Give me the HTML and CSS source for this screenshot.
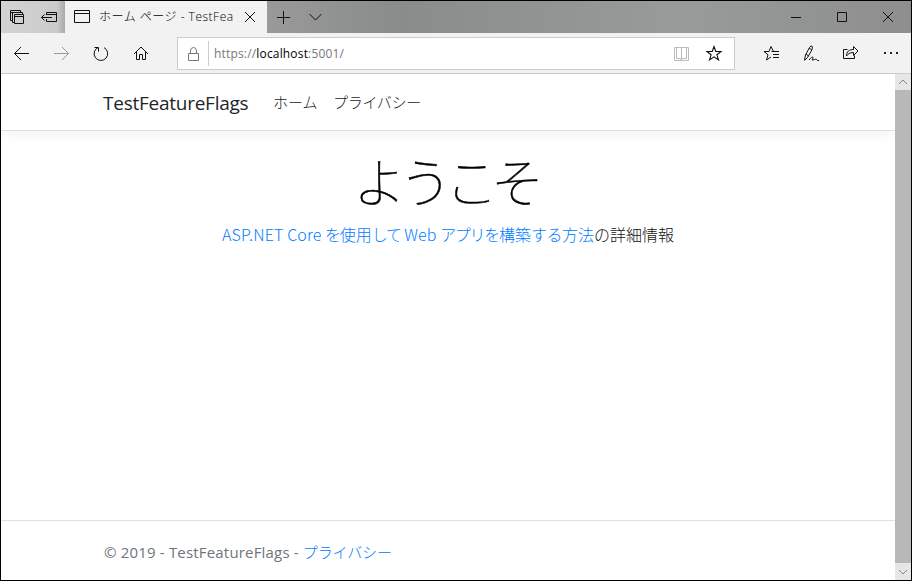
FILE: index.html
```html
<!DOCTYPE html>
<html lang="ja">
<head>
<meta charset="utf-8">
<title>ホーム ページ - TestFeatureFlags</title>
<link rel="stylesheet" href="styles.css">
</head>
<body>
<div class="window">
  <header class="titlebar">
    <div class="tab-tools">
      <svg width="64" height="32" viewBox="1 1 64 32"><path d="M12.500 20.500H10.500V10.500H20.500V12.500M10.500 12.500H20.500M14.500 22.500H12.500V12.500H22.500V14.500M14.500 14.500H23.500V23.500H14.500ZM14.500 16.500H23.500"/><path d="M46.500 15V12.500H56.500V21.500H46.500V19M46.500 14.500H56.500M41.500 17.500H52M44.500 14.500L41.500 17.500L44.500 20.500"/></svg>
    </div>
    <div class="tab">
      <svg width="16" height="14" viewBox="0 0 16 14"><path d="M.5 .5H15.500V12.500H.5ZM.5 3.500H15.500"/></svg>
      <span class="tab-title">ホーム ページ - TestFea</span>
      <svg class="tab-close" width="10" height="10" viewBox="0 0 10 10"><path d="M0 0L10 10M10 0L0 10"/></svg>
    </div>
    <svg class="new-tab" width="56" height="32" viewBox="267 1 56 32"><path d="M277 17.500H290M283.500 11V24"/><path d="M309.500 14L315.500 20L321.500 14"/></svg>
    <svg class="controls" width="138" height="32" viewBox="773 1 138 32"><path d="M791 17.500H801M837.500 12.500H846.500V21.500H837.500Z"/><path d="M883 12L893 22M893 12L883 22"/></svg>
  </header>
  <nav class="toolbar">
    <svg width="176" height="40" viewBox="1 33 176 40">
      <path d="M14.500 53.500H29M21 47L14.500 53.500L21 60"/>
      <path class="disabled" d="M54 53.500H68.500M62 47L68.500 53.500L62 60"/>
      <path d="M98 47.500A6.800 6.800 0 1 0 104 47.600M94.500 47.500H98.500V51.500"/>
      <path d="M134 54L141 47L148 54M136.500 52V59.500H139.500V54.500H142.500V59.500H145.500V52"/>
    </svg>
    <div class="address">
      <svg class="lock" width="11" height="14" viewBox="0 0 11 14"><path d="M.5 6.500H10.500V13.500H.5ZM2.500 6V4A3 3.500 0 0 1 8.500 4V6"/></svg>
      <div class="url">https://<b>localhost</b>:5001/</div>
      <svg class="address-icons" width="62" height="30" viewBox="672 39 62 30"><path class="book" d="M674.500 47.500H681.500V60.500M681.500 47.500H688.500V60.500H674.500V47.500M676.500 47V58.500H680.500L681.500 60L682.500 58.500H686.500V47"/><path class="star" d="M714 46.500L715.800 51.500H721L716.900 54.800L718.500 60L714 56.900L709.500 60L711.100 54.800L707 51.500H712.200Z"/></svg>
    </div>
    <svg class="actions" width="151" height="40" viewBox="760 33 151 40">
      <path d="M773.500 51.500L771 46.500L769 51.500H764L768 54.800L766.500 60L771 57M771.500 51.500H779M773 54.500H779M773 57.500H779"/>
      <path d="M804.500 60L805.500 55L809.500 47.500Q811 44.800 812.300 46.500Q813 48.500 811 51.500L807.500 57.500L804.500 60.500M806 54L808.500 56M809 48L812 50M809 60C813 55 814 57 812 60C815 60 816 58 817.500 60.500L819 60.500"/>
      <path d="M847.500 49.500H843.500V58.500H854.500V55.500M846.500 56C846.500 51.500 849 49.500 853.500 49.500V46.500L858 51L853.500 55.500V52.500C849.500 52.500 848 54 846.500 56Z"/>
      <path class="dots" d="M884 52h2v2h-2zM890 52h2v2h-2zM896 52h2v2h-2z"/>
    </svg>
  </nav>
  <div class="viewport">
    <div class="page">
      <header class="site-nav">
        <span class="brand">TestFeatureFlags</span>
        <a class="home">ホーム</a>
        <a class="privacy">プライバシー</a>
      </header>
      <main>
        <h1>ようこそ</h1>
        <p><a><span class="latin">ASP.NET Core</span> <span class="kana">を</span>使用<span class="kana">して</span> <span class="latin">Web</span> <span class="kana">アプリを</span>構築<span class="kana-wide">する</span>方法</a>の詳細情報</p>
      </main>
      <footer><span class="copyright">© 2019 - TestFeatureFlags -</span> <a>プライバシー</a></footer>
    </div>
    <div class="scrollbar">
      <svg width="16" height="16" viewBox="0 0 16 16"><path d="M4 10L8 6L12 10"/></svg>
      <div class="thumb"></div>
      <svg width="16" height="17" viewBox="0 0 16 17"><path d="M4 7L8 11L12 7"/></svg>
    </div>
  </div>
</div>
</body>
</html>
```
FILE: styles.css
```css
* { box-sizing: border-box; }
body { margin: 0; font-family: "Open Sans", "Noto Sans CJK JP", sans-serif; color: #212529; }
svg { display: block; flex: none; fill: none; stroke: #111; stroke-width: 1; }
.window { width: 912px; height: 581px; border: 1px solid #000; display: flex; flex-direction: column; background: #fff; }
.titlebar { height: 32px; flex: none; display: flex; background: linear-gradient(90deg, #ccc 0, #ccc 50px, #999 267px, #888c8a 400px, #979b99 680px, #8e8e8e 100%); }
.tab-tools { width: 64px; background: linear-gradient(90deg, #d3d3d3, #cbcbcb 56px, #a8a8a8); }
.tab { width: 202px; display: flex; align-items: center; padding-left: 9px; background: #f2f2f2; }
.tab-title { width: 137px; margin-left: 9px; white-space: nowrap; font: 300 12px/20px "Open Sans", "Noto Sans CJK JP", sans-serif; letter-spacing: .5px; color: #000; }
.tab-close { margin-left: 9px; }
.controls { margin-left: auto; }
.toolbar { height: 41px; flex: none; display: flex; background: #f2f2f2; border-bottom: 1px solid #ccc; }
.disabled { stroke: #999; }
.address { width: 558px; height: 33px; margin-top: 4px; display: flex; align-items: center; background: #fff; border: 1px solid #ccc; }
.lock { margin-left: 10px; stroke: #777; }
.url { height: 25px; margin-left: 9px; padding-left: 5px; border-left: 1px solid #ccc; font-size: 12px; line-height: 26px; letter-spacing: .17px; color: #777; white-space: nowrap; }
.url b { font-weight: 400; color: #000; }
.address-icons { margin-left: auto; }
.book { stroke: #bbb; }
.star { stroke-width: 1.1; }
.actions { margin-left: auto; }
.dots { fill: #222; stroke: none; }
.viewport { flex: 1; min-height: 0; display: flex; }
.page { flex: 1; display: flex; flex-direction: column; white-space: nowrap; }
.site-nav { height: 57px; flex: none; display: flex; align-items: center; padding-left: 102px; border-bottom: 1px solid #dee2e6; box-shadow: 0 4px 10px rgba(0,0,0,.05); }
.brand { width: 145px; padding-top: 1px; font-size: 19px; letter-spacing: -.25px; }
.home, .privacy { font: 300 15px/24px "Noto Sans CJK JP", sans-serif; color: #222; }
.home { margin-left: 25px; width: 60px; }
.privacy { letter-spacing: -.3px; }
main { flex: 1; text-align: center; }
h1 { margin: 16px 0 0; padding-right: 6px; font: 100 53px/67px "Noto Sans CJK JP", sans-serif; letter-spacing: -7px; color: #000; -webkit-text-stroke: .5px #000; }
p { margin: 8px 0 0; font: 300 16px/24px "Noto Sans CJK JP", sans-serif; color: #111; }
p a, footer a { color: #007bff; }
.latin { letter-spacing: .15px; }
.kana { letter-spacing: -1.3px; }
.kana-wide { letter-spacing: -.5px; }
footer { height: 60px; flex: none; padding-left: 103px; border-top: 1px solid #dee2e6; font-size: 15px; line-height: 63px; color: #6c757d; }
.copyright { letter-spacing: .18px; }
footer a { font: 300 15px/24px "Noto Sans CJK JP", sans-serif; letter-spacing: -.1px; }
.scrollbar { width: 16px; display: flex; flex-direction: column; background: #e6e6e6; }
.scrollbar svg { stroke: #888; }
.thumb { flex: 1; background: #b8b8b8; }
```
